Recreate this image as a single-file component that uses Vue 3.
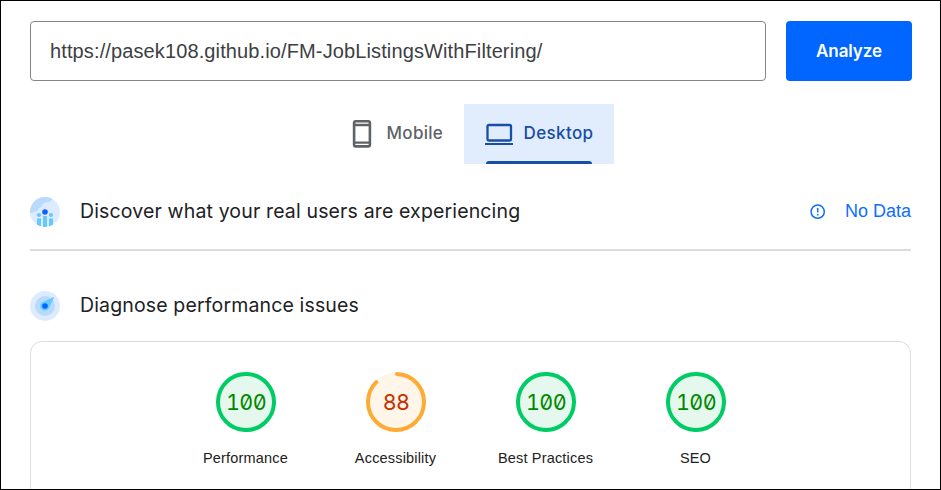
<script setup>
const scores = [
  { label: 'Performance', value: 100 },
  { label: 'Accessibility', value: 88 },
  { label: 'Best Practices', value: 100 },
  { label: 'SEO', value: 100 },
]
const R = 28
const C = 2 * Math.PI * R
const arc = (v) => (v === 100 ? 'none' : `${(C * v) / 100 - 2} ${C}`)
</script>

<template>
  <main class="page">
    <form class="search" @submit.prevent>
      <div class="url"><span class="url-text">https://pasek108.github.io/FM-JobListingsWithFiltering/</span></div>
      <button class="analyze"><span class="analyze-text">Analyze</span></button>
    </form>

    <nav class="tabs">
      <div class="tab mobile">
        <svg width="20" height="30" viewBox="0 0 20 30">
          <rect x="2.1" y="2.200" width="15.8" height="25.2" rx="1.6" fill="none" stroke="#5f6368" stroke-width="2.6" />
          <path d="M2 6H18M2 23.600H18" stroke="#5f6368" stroke-width="2.4" />
        </svg>
        <span class="tab-text mobile-text">Mobile</span>
      </div>
      <div class="tab desktop">
        <svg width="28" height="24" viewBox="0 0 28 24">
          <rect x="2.5" y="3" width="23.5" height="15.500" rx="1.6" fill="none" stroke="#174ea6" stroke-width="2.3" />
          <path d="M0 22H28" stroke="#174ea6" stroke-width="2" />
        </svg>
        <span class="tab-text desktop-text">Desktop</span>
        <i class="indicator"></i>
      </div>
    </nav>

    <section class="row discover">
      <svg class="badge" width="30" height="30" viewBox="0 0 30 30">
        <defs><clipPath id="disc"><circle cx="15" cy="15" r="15" /></clipPath></defs>
        <g clip-path="url(#disc)">
          <rect width="30" height="30" fill="#dcecfe" />
          <path d="M0 0H22V2Q21 5 17 5.5Q13 5 12 9Q11 11 8.500 11Q8 15 4 14.500L2 16H0Z" fill="#b8dafd" />
          <circle cx="9" cy="18" r="2.100" fill="#66c8ff" />
          <circle cx="21" cy="18" r="2.100" fill="#66c8ff" />
          <circle cx="15" cy="15" r="2.800" fill="#0b66f8" />
          <path d="M7 21.500H11V30H7ZM13 19H17V30H13ZM19 21.500H23V30H19Z" fill="#66c8ff" />
        </g>
      </svg>
      <h2 class="discover-text">Discover what your real users are experiencing</h2>
      <a class="nodata">
        <svg width="16" height="16" viewBox="0 0 16 16">
          <circle cx="7.700" cy="7.700" r="6.600" fill="none" stroke="#0d6efd" stroke-width="1.500" />
          <path d="M7.700 4V8.600M7.700 10V11.500" stroke="#0d6efd" stroke-width="1.500" />
        </svg>
        <span class="nodata-text">No Data</span>
      </a>
    </section>

    <section class="row diagnose">
      <svg class="badge" width="30" height="30" viewBox="0 0 30 30">
        <circle cx="15" cy="15" r="15" fill="#dcecfe" />
        <circle cx="15" cy="15" r="10" fill="#b8dafd" />
        <path d="M24.300 5.700L12.800 11Q10 12.500 10.300 15.500Q11 19.500 15 19.600Q18 19.600 19.200 17Z" fill="#66c8ff" />
        <circle cx="15" cy="15" r="2.800" fill="#0066ff" />
      </svg>
      <h2 class="diagnose-text">Diagnose performance issues</h2>
    </section>

    <section class="scores">
      <div v-for="s in scores" :key="s.label" class="score" :class="s.value >= 90 ? 'pass' : 'average'">
        <div class="gauge">
          <svg width="60" height="60" viewBox="0 0 60 60">
            <circle class="disc" cx="30" cy="30" r="29.500" />
            <circle class="arc" cx="30" cy="30" :r="R" :stroke-dasharray="arc(s.value)" transform="rotate(-88 30 30)" />
          </svg>
          <span class="value">{{ s.value }}</span>
        </div>
        <span class="label">{{ s.label }}</span>
      </div>
    </section>
  </main>
</template>

<style>
body { background: #fff; overflow: hidden; }
</style>

<style scoped>
.page { box-sizing: border-box; width: 941px; height: 490px; border: 1px solid #000; padding: 20px 28px 0 29px; overflow: hidden; background: #fff; font-family: "Liberation Sans", sans-serif; }
.search { display: flex; gap: 20px; height: 60px; }
.url { box-sizing: border-box; width: 736px; border: 1px solid #80868b; border-radius: 4px; padding: 0 19px; display: flex; align-items: center; color: #3c4043; font-size: 20px; letter-spacing: 0.120px; white-space: nowrap; }
.analyze { width: 126px; border: 0; border-radius: 4px; padding: 0; background: #06f; color: #fff; font: 600 17px Inter, sans-serif; letter-spacing: -0.100px; }
.tabs { display: flex; justify-content: center; height: 60px; margin-top: 23px; padding-left: 1px; }
.tab { box-sizing: border-box; display: flex; align-items: center; font: 500 17px Inter, sans-serif; }
.mobile { width: 134px; padding-left: 22px; gap: 15px; color: #5f6368; letter-spacing: 0.300px; }
.desktop { position: relative; width: 150px; padding-left: 21px; gap: 11px; color: #174ea6; background: #e1edfc; letter-spacing: 0.380px; }
.tab-text { line-height: 24px; margin-top: -2px; white-space: nowrap; }
.indicator { position: absolute; left: 22px; right: 22px; bottom: 0; height: 3px; border-radius: 3px 3px 0 0; background: #174ea6; }
.row { display: flex; align-items: center; width: 881px; box-sizing: border-box; }
.row h2 { margin: -2px 0 0 20px; font: 400 19.500px/28px Inter, sans-serif; letter-spacing: 0.145px; color: #202124; white-space: nowrap; }
.discover { height: 87px; padding-top: 10px; border-bottom: 2px solid #dadce0; }
.diagnose { height: 90px; padding-top: 20px; }
.nodata { display: flex; align-items: center; gap: 19px; margin-left: auto; color: #0d6efd; font-size: 18px; white-space: nowrap; }
.nodata-text { margin-top: -1px; line-height: 22px; }
.scores { box-sizing: border-box; width: 881px; height: 170px; border: 1px solid #dadce0; border-radius: 12px; padding-top: 30px; display: flex; justify-content: center; }
.score { width: 150px; display: flex; flex-direction: column; align-items: center; }
.gauge { display: grid; place-items: center; width: 60px; height: 60px; }
.gauge > * { grid-area: 1 / 1; }
.disc { fill: #e4f8ed; }
.arc { fill: none; stroke: #0c6; stroke-width: 4; stroke-linecap: round; }
.value { padding-left: 1px; font: 400 21.500px/30px Inter, sans-serif; font-feature-settings: "zero", "tnum"; letter-spacing: -0.600px; color: #080; }
.average .disc { fill: #fff5e9; }
.average .arc { stroke: #fa3; }
.average .value { color: #c33300; }
.label { margin-top: 16px; font-size: 14.500px; line-height: 20px; letter-spacing: 0.180px; color: #212121; white-space: nowrap; }
</style>
